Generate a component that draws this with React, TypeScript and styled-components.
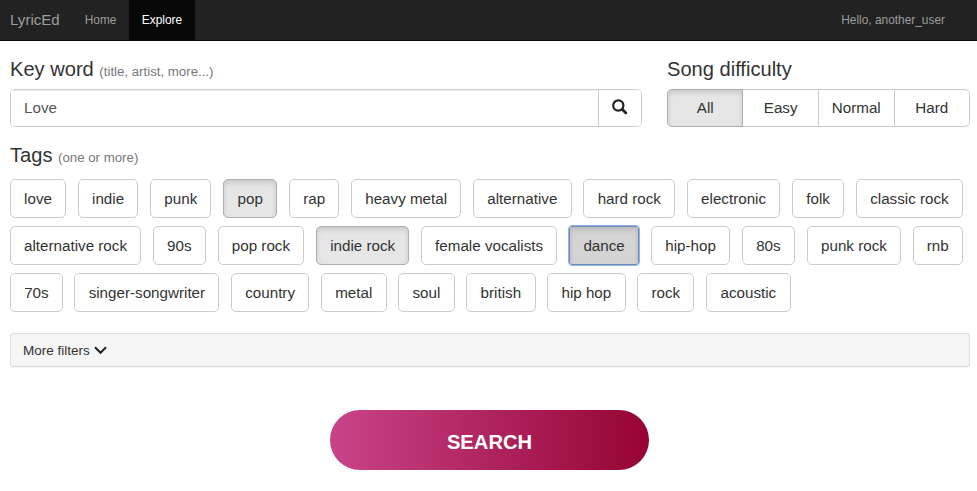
import React from 'react';
import styled, { createGlobalStyle, css } from 'styled-components';

const GlobalStyle = createGlobalStyle`
  *, *::before, *::after { box-sizing: border-box; }
  body {
    margin: 0;
    background: #fff;
    color: #333;
    font-family: "Liberation Sans", Arial, Helvetica, sans-serif;
  }
  button, input { font-family: inherit; margin: 0; }
`;

const Page = styled.div`
  height: 491px;
  overflow: hidden;
`;

const Navbar = styled.nav`
  display: flex;
  height: 41px;
  background: #222;
  border-bottom: 1px solid #080808;
  line-height: 39px;
`;

const Brand = styled.a`
  width: 72px;
  padding-left: 10px;
  font-size: 15.1px;
  color: #9d9d9d;
`;

const NavLink = styled.a<{ $active?: boolean }>`
  height: 40px;
  padding: 0 12.7px;
  font-size: 11.9px;
  line-height: 40px;
  color: ${p => (p.$active ? '#fff' : '#9d9d9d')};
  background: ${p => (p.$active ? '#080808' : 'transparent')};
`;

const Greeting = styled.span`
  margin-left: auto;
  padding-right: 32px;
  font-size: 11.9px;
  line-height: 40px;
  color: #9d9d9d;
`;

const Content = styled.main`
  padding: 0 7px 0 10px;
`;

const TopRow = styled.div`
  display: grid;
  grid-template-columns: 632px 303px;
  column-gap: 25px;
  padding-top: 17px;
`;

const Heading = styled.h3`
  height: 23px;
  margin: 0 0 7.6px;
  font-size: 20.1px;
  line-height: 23px;
  font-weight: 400;
`;

const Hint = styled.small`
  font-size: 13.25px;
  line-height: 1;
  color: #777;
`;

const InputGroup = styled.div`
  display: flex;
  height: 38.5px;
  border: 1px solid #ccc;
  border-radius: 5px;
  overflow: hidden;
`;

const KeywordInput = styled.input`
  flex: 1;
  min-width: 0;
  padding: 0 13px;
  border: 0;
  outline: 0;
  font-size: 15.2px;
  color: #555;
  box-shadow: inset 0 1px 1px rgba(0, 0, 0, 0.075);
`;

const IconButton = styled.button`
  display: flex;
  align-items: center;
  justify-content: center;
  width: 43.5px;
  padding: 0 0 2px;
  border: 0;
  border-left: 1px solid #ccc;
  background: #fff;
`;

const pressed = css`
  background: #e6e6e6;
  border-color: #adadad;
  box-shadow: inset 0 3px 5px rgba(0, 0, 0, 0.125);
`;

const Segmented = styled.div`
  display: grid;
  grid-template-columns: 75.4px 75.6px 75.6px 76.4px;
  height: 38.5px;
`;

const Segment = styled.button<{ $active?: boolean }>`
  padding: 0;
  margin-right: -1px;
  border: 1px solid #ccc;
  background: #fff;
  color: #333;
  font-size: 15.2px;
  &:first-child { border-radius: 5px 0 0 5px; }
  &:last-child { border-radius: 0 5px 5px 0; margin-right: 0; }
  ${p => p.$active && css`position: relative; ${pressed}`}
`;

const TagsHeading = styled(Heading)`
  margin: 17px 0 12px;
`;

const TagList = styled.div`
  display: flex;
  flex-direction: column;
  gap: 8.6px;
`;

const TagRow = styled.div`
  display: flex;
  gap: 11.7px;
`;

type TagState = 'active' | 'focused';

const Tag = styled.button<{ $width: number; $state?: TagState }>`
  flex: none;
  width: ${p => p.$width}px;
  height: 38.5px;
  padding: 0;
  border: 1px solid #ccc;
  border-radius: 5px;
  background: #fff;
  color: #333;
  font-size: 15.2px;
  white-space: nowrap;
  ${p => p.$state && pressed}
  ${p => p.$state === 'focused' && css`
    background: #d4d4d4;
    border-color: #7189b0;
    outline: 1px solid #8fb5ef;
    outline-offset: 0;
    border-radius: 3px;
  `}
`;

const FilterPanel = styled.div`
  display: flex;
  align-items: center;
  height: 34px;
  margin-top: 21px;
  padding: 1px 0 0 12px;
  border: 1px solid #ddd;
  border-radius: 3px;
  background: #f5f5f5;
  box-shadow: 0 1px 1px rgba(0, 0, 0, 0.05);
  font-size: 13.5px;
  svg { margin-left: 4px; }
`;

const SearchButton = styled.button`
  display: block;
  width: 319px;
  height: 60px;
  margin: 43px 0 0 320px;
  padding: 5px 0 0;
  border: 0;
  border-radius: 30px;
  background: linear-gradient(90deg, #c94489, #960333);
  color: #fff;
  font-size: 20.2px;
  font-weight: 700;
`;

type TagItem = { name: string; width: number; state?: TagState };

const tagRows: TagItem[][] = [
  [
    { name: 'love', width: 56 },
    { name: 'indie', width: 60.8 },
    { name: 'punk', width: 61.3 },
    { name: 'pop', width: 54.2, state: 'active' },
    { name: 'rap', width: 50.2 },
    { name: 'heavy metal', width: 110.5 },
    { name: 'alternative', width: 98.5 },
    { name: 'hard rock', width: 92 },
    { name: 'electronic', width: 93.2 },
    { name: 'folk', width: 52.4 },
    { name: 'classic rock', width: 107 },
  ],
  [
    { name: 'alternative rock', width: 131 },
    { name: '90s', width: 53.2 },
    { name: 'pop rock', width: 86.7 },
    { name: 'indie rock', width: 93.5, state: 'active' },
    { name: 'female vocalists', width: 136 },
    { name: 'dance', width: 70.6, state: 'focused' },
    { name: 'hip-hop', width: 79 },
    { name: '80s', width: 53.3 },
    { name: 'punk rock', width: 94.3 },
    { name: 'rnb', width: 50 },
  ],
  [
    { name: '70s', width: 52.8 },
    { name: 'singer-songwriter', width: 144.8 },
    { name: 'country', width: 78.3 },
    { name: 'metal', width: 65.6 },
    { name: 'soul', width: 56.3 },
    { name: 'british', width: 69.3 },
    { name: 'hip hop', width: 78.3 },
    { name: 'rock', width: 57.3 },
    { name: 'acoustic', width: 84.4 },
  ],
];

const levels = ['All', 'Easy', 'Normal', 'Hard'];

const SearchIcon = () => (
  <svg width="16" height="16" viewBox="0 0 16 16" fill="none" stroke="#222">
    <circle cx="6.3" cy="6.5" r="5.1" strokeWidth="2.2" />
    <path d="M10.1 10.3 L13.9 13.9" strokeWidth="2.8" strokeLinecap="round" />
  </svg>
);

const ChevronIcon = () => (
  <svg width="13" height="9" viewBox="0 0 13 9" fill="none" stroke="#222">
    <path d="M1 1.3 L6.5 6.8 L12 1.3" strokeWidth="2" />
  </svg>
);

export default function App() {
  return (
    <Page>
      <GlobalStyle />
      <Navbar>
        <Brand>LyricEd</Brand>
        <NavLink>Home</NavLink>
        <NavLink $active>Explore</NavLink>
        <Greeting>Hello, another_user</Greeting>
      </Navbar>
      <Content>
        <TopRow>
          <section>
            <Heading>Key word <Hint>(title, artist, more...)</Hint></Heading>
            <InputGroup>
              <KeywordInput defaultValue="Love" aria-label="Key word" />
              <IconButton aria-label="Search"><SearchIcon /></IconButton>
            </InputGroup>
          </section>
          <section>
            <Heading>Song difficulty</Heading>
            <Segmented>
              {levels.map(level => (
                <Segment key={level} $active={level === 'All'}>{level}</Segment>
              ))}
            </Segmented>
          </section>
        </TopRow>
        <TagsHeading>Tags <Hint>(one or more)</Hint></TagsHeading>
        <TagList>
          {tagRows.map((row, i) => (
            <TagRow key={i}>
              {row.map(tag => (
                <Tag key={tag.name} $width={tag.width} $state={tag.state}>{tag.name}</Tag>
              ))}
            </TagRow>
          ))}
        </TagList>
        <FilterPanel>More filters <ChevronIcon /></FilterPanel>
        <SearchButton>SEARCH</SearchButton>
      </Content>
    </Page>
  );
}
